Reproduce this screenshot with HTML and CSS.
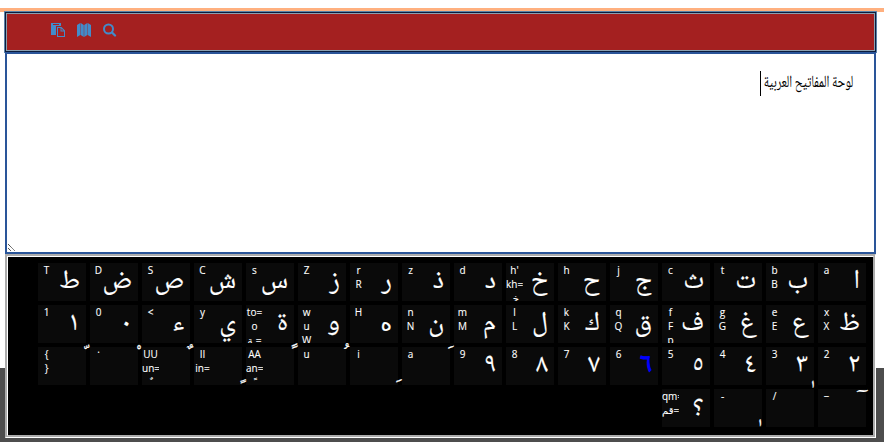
FILE: index.html
```html
<!DOCTYPE html>
<html lang="ar">
<head>
<meta charset="utf-8">
<title>لوحة المفاتيح العربية</title>
<link rel="stylesheet" href="styles.css">
</head>
<body>
<div class="stripe"></div>
<main class="editor">
<nav class="toolbar">
<svg viewBox="0 0 14 14"><path fill="currentColor" fill-rule="evenodd" d="M0 0h10v3H5v9H0zM2 1v1h6V1z"/><path fill="currentColor" fill-rule="evenodd" d="M6 4h4.5L14 7.5V14H6zM7 5v8h6V8.5h-3.5V5zM10.5 5.5v2h2z"/></svg>
<svg viewBox="0 0 14 14"><path fill="currentColor" d="M0 2l3.3-2v12L0 14zM3.7 0L6.8 2v12l-3.1-2zM7.2 2l3.1-2v12l-3.1 2zM10.7 0L14 2v12l-3.3-2z"/></svg>
<svg viewBox="0 0 14 14"><g fill="none" stroke="currentColor"><circle cx="5.5" cy="6" r="4.5" stroke-width="2"/><path d="M9 9.5l3 3" stroke-width="2.3" stroke-linecap="round"/></g></svg>
</nav>
<section class="text" dir="rtl"><div class="line"><span>لوحة المفاتيح العربية</span></div><i class="caret"></i><svg class="grip" viewBox="0 0 9 9"><path d="M1 1l7 7M1 5l3 3" stroke="#333" stroke-dasharray="1.2 .4" fill="none"/></svg></section>
<section class="keys" dir="rtl">
<div class="key"><b>ا</b><small>a</small></div>
<div class="key"><b>ب</b><small>b<br>B</small></div>
<div class="key"><b>ت</b><small>t</small></div>
<div class="key"><b>ث</b><small>c</small></div>
<div class="key"><b>ج</b><small>j</small></div>
<div class="key"><b>ح</b><small>h</small></div>
<div class="key"><b>خ</b><small>h'<br>kh=<br>خـ</small></div>
<div class="key"><b>د</b><small>d</small></div>
<div class="key"><b>ذ</b><small>z</small></div>
<div class="key"><b>ر</b><small>r<br>R</small></div>
<div class="key"><b>ز</b><small>Z</small></div>
<div class="key"><b>س</b><small>s</small></div>
<div class="key"><b>ش</b><small>C</small></div>
<div class="key"><b>ص</b><small>S</small></div>
<div class="key"><b>ض</b><small>D</small></div>
<div class="key"><b>ط</b><small>T</small></div>
<div class="key"><b>ظ</b><small>x<br>X</small></div>
<div class="key"><b>ع</b><small>e<br>E</small></div>
<div class="key"><b>غ</b><small>g<br>G</small></div>
<div class="key"><b>ف</b><small>f<br>F<br>p</small></div>
<div class="key"><b>ق</b><small>q<br>Q</small></div>
<div class="key"><b>ك</b><small>k<br>K</small></div>
<div class="key"><b>ل</b><small>l<br>L</small></div>
<div class="key"><b>م</b><small>m<br>M</small></div>
<div class="key"><b>ن</b><small>n<br>N</small></div>
<div class="key"><b class="heh">ه</b><small>H</small></div>
<div class="key"><b>و</b><small>w<br>u<br>W</small></div>
<div class="key"><b>ة</b><small>to=<br>o<br>ـة=</small></div>
<div class="key"><b>ي</b><small>y</small></div>
<div class="key"><b>ء</b><small>&lt;</small></div>
<div class="key"><b>٠</b><small>0</small></div>
<div class="key"><b>١</b><small>1</small></div>
<div class="key"><b>٢</b><small>2</small></div>
<div class="key"><b>٣</b><small>3</small></div>
<div class="key"><b>٤</b><small>4</small></div>
<div class="key"><b>٥</b><small>5</small></div>
<div class="key"><b class="active">٦</b><small>6</small></div>
<div class="key"><b>٧</b><small>7</small></div>
<div class="key"><b>٨</b><small>8</small></div>
<div class="key"><b>٩</b><small>9</small></div>
<div class="key"><b class="above">&nbsp;َ</b><small>a</small></div>
<div class="key"><b class="below">&nbsp;ِ</b><small>i</small></div>
<div class="key"><b class="above">&nbsp;ُ</b><small>u</small></div>
<div class="key"><b class="above">&nbsp;ً</b><small>AA<br>an=<br>&nbsp;ً</small></div>
<div class="key"><b class="below">&nbsp;ٍ</b><small>II<br>in=<br>&nbsp;ٍ</small></div>
<div class="key"><b class="above">&nbsp;ٌ</b><small>UU<br>un=<br>&nbsp;ٌ</small></div>
<div class="key"><b class="above">&nbsp;ْ</b><small class="lift">.</small></div>
<div class="key"><b class="above">&nbsp;ّ</b><small>{<br>}</small></div>
<div class="key"><b class="madda">&nbsp;ٓ</b><small class="lift">_</small></div>
<div class="key"><b class="alef">&nbsp;ٰ</b><small>/</small></div>
<div class="key"><b class="below subalef">&nbsp;ٖ</b><small>-</small></div>
<div class="key"><b>؟</b><small>qm=<br>قم=</small></div>
</section>
</main>
</body>
</html>
```
FILE: styles.css
```css
* { box-sizing: border-box; }
body { display: flow-root; margin: 0; height: 442px; overflow: hidden; background: linear-gradient(#fff 368px, #4d4d4d 368px); font-family: "Open Sans", "DejaVu Sans", sans-serif; }
.stripe { height: 4px; margin-top: 8px; background: #ffb07f; }
.editor { width: 871px; margin-left: 5px; }
.toolbar { height: 40px; background: #a42020; border: 1px solid #0b1c3d; outline: 1px solid #5a82a8; outline-offset: 0; box-shadow: inset 0 0 0 1px #8ba0b0; display: flex; gap: 12px; padding: 10px 45px; color: #428bca; }
.toolbar svg { width: 14px; height: 14px; }
.text { position: relative; height: 202px; border: 2px solid #2a5599; background: #fff; padding: 17px 20px; display: flex; font: 17px "Noto Naskh Arabic", "Amiri", "Scheherazade", "Traditional Arabic", serif; line-height: 25px; }
.line { width: 90px; white-space: nowrap; }
.line span { display: inline-block; transform: translateX(-1px) scaleX(.71); transform-origin: right; }
.caret { width: 1px; height: 25px; background: #000; margin-right: 3px; }
.grip { position: absolute; left: 0; bottom: 0; width: 9px; height: 9px; }
.keys { height: 184px; background: #000; border: 3px groove #fff; display: grid; grid-template-columns: repeat(16, 48px); grid-auto-rows: 38px; gap: 4px; padding: 6px 7px; color: #fff; }
.key { background: #0a0a0a; display: flex; }
.key b { width: 31px; height: 38px; font: 27px/38px "Noto Naskh Arabic", "Amiri", "Scheherazade", "Traditional Arabic", serif; padding-right: 6px; white-space: nowrap; -webkit-text-stroke: .15px currentColor; }
.key small { width: 17px; height: 38px; overflow: hidden; font-size: 10px; line-height: 14px; direction: ltr; text-align: center; white-space: nowrap; -webkit-text-stroke: .1px currentColor; }
.key .active { color: #00f; -webkit-text-stroke-width: 1px; }
.key .heh { font-family: "DejaVu Sans", sans-serif; font-size: 22px; }
.key .above, .key .below, .key .madda, .key .alef { z-index: 1; -webkit-text-stroke-width: .2px; }
.key .above { transform: translate(10px, -16px); }
.key .below { transform: translate(10px, 4px); }
.key .subalef { transform: translate(7px, 2px); }
.key .alef { transform: translate(8px, -19px); }
.key .madda { transform: translate(3px, -14px) scaleX(1.4); }
.key .lift { line-height: 4px; }
```
